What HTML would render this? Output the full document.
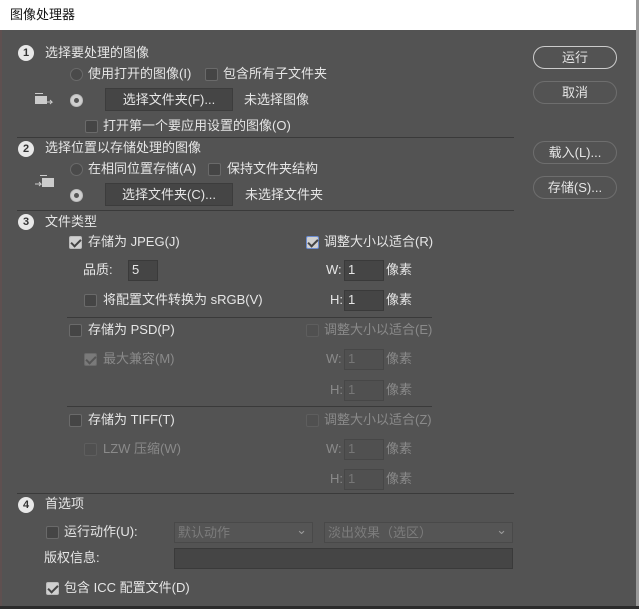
<!DOCTYPE html>
<html><head><meta charset="utf-8"><style>
*{margin:0;padding:0;box-sizing:border-box}
body{width:639px;height:609px;background:#535353;position:relative;overflow:hidden;font-family:"Liberation Sans","Noto Sans CJK SC",sans-serif;font-size:13px;color:#e6e6e6}
.t{position:absolute;line-height:16px;white-space:nowrap}
.d{color:#8a8a8a}
.cb{position:absolute;width:13px;height:13px;border:1px solid #6a6a6a;background:#454545;border-radius:2px}
.cb.on{background:#d0d0d0;border-color:#bbb}
.cb.on::after{content:"";position:absolute;left:3px;top:0px;width:4px;height:8px;border:solid #444;border-width:0 2px 2px 0;transform:rotate(45deg)}
.cb.dis{border-color:#5e5e5e;background:#505050}
.cb.don{background:#7a7a7a;border-color:#6a6a6a}
.cb.don::after{content:"";position:absolute;left:3px;top:0px;width:4px;height:8px;border:solid #555;border-width:0 2px 2px 0;transform:rotate(45deg)}
.cb.blue{border-color:#6a8bd0}
.rd{position:absolute;width:13px;height:13px;border-radius:50%;border:1px solid #6a6a6a;background:#4a4a4a}
.rd.on{background:#cfcfcf;border-color:#bbb}
.rd.on::after{content:"";position:absolute;left:3px;top:3px;width:5px;height:5px;border-radius:50%;background:#555}
.btn{position:absolute;background:#454545;border:1px solid #3c3c3c;text-align:center;line-height:21px}
.in{position:absolute;background:#454545;border:1px solid #3a3a3a;padding-left:3px;line-height:18px}
.in.dis{background:#505050;border-color:#474747;color:#777}
.num{position:absolute;width:16px;height:16px;border-radius:50%;background:#e8e8e8;color:#333;font-weight:bold;font-size:11px;text-align:center;line-height:16px}
.sep{position:absolute;height:1px;background:#3a3a3a}
.pb{position:absolute;left:533px;width:84px;height:23px;border:1px solid #8a8a8a;border-radius:12px;text-align:center;line-height:21px}
.sel{position:absolute;height:21px;border:1px solid #494949;background:#555;color:#7c7c7c;padding-left:3px;line-height:19px}
.sel::after{content:"⌄";position:absolute;right:5px;top:-3px;color:#999}
</style></head><body>
<div style="position:absolute;left:0;top:0;width:639px;height:30px;background:#fff"></div>
<div class="t" style="left:10px;top:7px;color:#111">图像处理器</div>
<div style="position:absolute;left:0;top:30px;width:2px;height:579px;background:#5f5050"></div>
<div style="position:absolute;left:636px;top:0;width:3px;height:609px;background:#9a9a9a"></div>
<div style="position:absolute;left:0;top:606px;width:639px;height:3px;background:#2b2b2b"></div>

<div class="num" style="left:18px;top:45px">1</div>
<div class="t" style="left:45px;top:45px">选择要处理的图像</div>
<div class="rd" style="left:70px;top:68px"></div>
<div class="t" style="left:88px;top:66px">使用打开的图像(I)</div>
<div class="cb" style="left:205px;top:68px"></div>
<div class="t" style="left:223px;top:66px">包含所有子文件夹</div>
<svg style="position:absolute;left:34px;top:93px" width="22" height="14"><rect x="1" y="0" width="8" height="1" fill="#ccc"/><rect x="1" y="3" width="12" height="8" fill="#ccc"/><path d="M13 9h5l-2-2M18 9l-2 2" stroke="#ccc" fill="none"/></svg>
<div class="rd on" style="left:70px;top:94px"></div>
<div class="btn" style="left:105px;top:88px;width:128px;height:23px">选择文件夹(F)...</div>
<div class="t" style="left:244px;top:92px">未选择图像</div>
<div class="cb" style="left:85px;top:120px"></div>
<div class="t" style="left:103px;top:118px">打开第一个要应用设置的图像(O)</div>
<div class="sep" style="left:17px;top:137px;width:497px"></div>

<div class="num" style="left:18px;top:141px">2</div>
<div class="t" style="left:45px;top:140px">选择位置以存储处理的图像</div>
<div class="rd" style="left:70px;top:163px"></div>
<div class="t" style="left:88px;top:161px">在相同位置存储(A)</div>
<div class="cb" style="left:208px;top:163px"></div>
<div class="t" style="left:227px;top:161px">保持文件夹结构</div>
<svg style="position:absolute;left:34px;top:175px" width="22" height="16"><rect x="6" y="0" width="7" height="1" fill="#ccc"/><rect x="8" y="3" width="12" height="9" fill="#ccc"/><path d="M1 9h6l-2-2M7 9l-2 2" stroke="#ccc" fill="none"/></svg>
<div class="rd on" style="left:70px;top:189px"></div>
<div class="btn" style="left:105px;top:183px;width:128px;height:23px">选择文件夹(C)...</div>
<div class="t" style="left:245px;top:187px">未选择文件夹</div>
<div class="sep" style="left:17px;top:210px;width:497px"></div>

<div class="num" style="left:18px;top:214px">3</div>
<div class="t" style="left:45px;top:214px">文件类型</div>
<div class="cb on" style="left:69px;top:236px"></div>
<div class="t" style="left:88px;top:234px">存储为 JPEG(J)</div>
<div class="cb on blue" style="left:306px;top:236px"></div>
<div class="t" style="left:324px;top:234px">调整大小以适合(R)</div>
<div class="t" style="left:83px;top:262px">品质:</div>
<div class="in" style="left:128px;top:260px;width:30px;height:21px">5</div>
<div class="t" style="left:326px;top:262px">W:</div>
<div class="in" style="left:344px;top:260px;width:40px;height:21px">1</div>
<div class="t" style="left:386px;top:262px">像素</div>
<div class="cb" style="left:84px;top:294px"></div>
<div class="t" style="left:103px;top:292px">将配置文件转换为 sRGB(V)</div>
<div class="t" style="left:330px;top:292px">H:</div>
<div class="in" style="left:344px;top:290px;width:40px;height:21px">1</div>
<div class="t" style="left:386px;top:292px">像素</div>
<div class="sep" style="left:67px;top:317px;width:365px"></div>

<div class="cb" style="left:69px;top:324px"></div>
<div class="t" style="left:88px;top:322px">存储为 PSD(P)</div>
<div class="cb dis" style="left:306px;top:324px"></div>
<div class="t d" style="left:324px;top:322px">调整大小以适合(E)</div>
<div class="cb don" style="left:84px;top:353px"></div>
<div class="t d" style="left:103px;top:351px">最大兼容(M)</div>
<div class="t d" style="left:326px;top:351px">W:</div>
<div class="in dis" style="left:344px;top:349px;width:40px;height:21px">1</div>
<div class="t d" style="left:386px;top:351px">像素</div>
<div class="t d" style="left:330px;top:382px">H:</div>
<div class="in dis" style="left:344px;top:380px;width:40px;height:21px">1</div>
<div class="t d" style="left:386px;top:382px">像素</div>
<div class="sep" style="left:67px;top:406px;width:365px"></div>

<div class="cb" style="left:69px;top:414px"></div>
<div class="t" style="left:88px;top:412px">存储为 TIFF(T)</div>
<div class="cb dis" style="left:306px;top:414px"></div>
<div class="t d" style="left:324px;top:412px">调整大小以适合(Z)</div>
<div class="cb dis" style="left:84px;top:443px"></div>
<div class="t d" style="left:103px;top:441px">LZW 压缩(W)</div>
<div class="t d" style="left:326px;top:441px">W:</div>
<div class="in dis" style="left:344px;top:439px;width:40px;height:21px">1</div>
<div class="t d" style="left:386px;top:441px">像素</div>
<div class="t d" style="left:330px;top:471px">H:</div>
<div class="in dis" style="left:344px;top:469px;width:40px;height:21px">1</div>
<div class="t d" style="left:386px;top:471px">像素</div>
<div class="sep" style="left:17px;top:493px;width:497px"></div>

<div class="num" style="left:18px;top:497px">4</div>
<div class="t" style="left:45px;top:496px">首选项</div>
<div class="cb" style="left:46px;top:526px"></div>
<div class="t" style="left:64px;top:524px">运行动作(U):</div>
<div class="sel" style="left:174px;top:522px;width:139px">默认动作</div>
<div class="sel" style="left:324px;top:522px;width:189px">淡出效果（选区）</div>
<div class="t" style="left:44px;top:550px">版权信息:</div>
<div class="in" style="left:174px;top:548px;width:339px;height:21px"></div>
<div class="cb on" style="left:46px;top:582px"></div>
<div class="t" style="left:64px;top:580px">包含 ICC 配置文件(D)</div>

<div class="pb" style="top:46px;border-color:#ccc">运行</div>
<div class="pb" style="top:81px;border-color:#6e6e6e">取消</div>
<div class="pb" style="top:141px;border-color:#6e6e6e">载入(L)...</div>
<div class="pb" style="top:176px;border-color:#6e6e6e">存储(S)...</div>
</body></html>
